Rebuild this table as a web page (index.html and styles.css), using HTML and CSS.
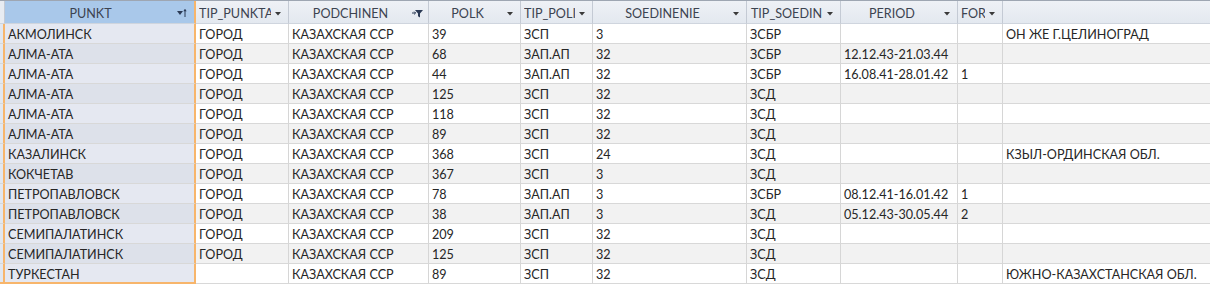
FILE: index.html
```html
<!DOCTYPE html>
<html lang="ru">
<head>
<meta charset="utf-8">
<title>Datasheet</title>
<link rel="stylesheet" href="styles.css">
</head>
<body>
<div class="sheet">
  <div class="row head">
    <div class="c selc"></div>
    <div class="c h sel"><span class="lbl">PUNKT</span><svg class="ic sort" width="10" height="9" viewBox="0 0 10 9"><path d="M0 3h6l-3 4z" fill="#2b3a55"/><path d="M8 9V1.5" stroke="#2b3a55" stroke-width="1"/><path d="M6.3 3.2L8 1l1.7 2.2z" fill="#2b3a55"/></svg></div>
    <div class="c h"><span class="lbl">TIP_PUNKTA</span><svg class="ic dd" width="6" height="4" viewBox="0 0 6 4"><path d="M0 0h6l-3 3.5z" fill="#3a3a3a"/></svg></div>
    <div class="c h"><span class="lbl">PODCHINEN</span><svg class="ic filt" width="11" height="9" viewBox="0 0 11 9"><path d="M3 1h8l-3 3.5V8.5l-2-1.2V4.5z" fill="#2b3a55"/><path d="M0 4h3.5M2.2 2.6L3.6 4 2.2 5.4" stroke="#2b3a55" stroke-width="1" fill="none"/></svg></div>
    <div class="c h"><span class="lbl">POLK</span><svg class="ic dd" width="6" height="4" viewBox="0 0 6 4"><path d="M0 0h6l-3 3.5z" fill="#3a3a3a"/></svg></div>
    <div class="c h"><span class="lbl">TIP_POLI</span><svg class="ic dd" width="6" height="4" viewBox="0 0 6 4"><path d="M0 0h6l-3 3.5z" fill="#3a3a3a"/></svg></div>
    <div class="c h"><span class="lbl">SOEDINENIE</span><svg class="ic dd" width="6" height="4" viewBox="0 0 6 4"><path d="M0 0h6l-3 3.5z" fill="#3a3a3a"/></svg></div>
    <div class="c h"><span class="lbl">TIP_SOEDIN</span><svg class="ic dd" width="6" height="4" viewBox="0 0 6 4"><path d="M0 0h6l-3 3.5z" fill="#3a3a3a"/></svg></div>
    <div class="c h"><span class="lbl">PERIOD</span><svg class="ic dd" width="6" height="4" viewBox="0 0 6 4"><path d="M0 0h6l-3 3.5z" fill="#3a3a3a"/></svg></div>
    <div class="c h"><span class="lbl">FOR</span><svg class="ic dd" width="6" height="4" viewBox="0 0 6 4"><path d="M0 0h6l-3 3.5z" fill="#3a3a3a"/></svg></div>
    <div class="c h last"></div>
  </div>

  <div class="row"><div class="c selc"></div><div class="c sel">АКМОЛИНСК</div><div class="c">ГОРОД</div><div class="c">КАЗАХСКАЯ ССР</div><div class="c">39</div><div class="c">ЗСП</div><div class="c">3</div><div class="c">ЗСБР</div><div class="c"></div><div class="c"></div><div class="c last">ОН ЖЕ Г.ЦЕЛИНОГРАД</div></div>
  <div class="row alt"><div class="c selc"></div><div class="c sel">АЛМА-АТА</div><div class="c">ГОРОД</div><div class="c">КАЗАХСКАЯ ССР</div><div class="c">68</div><div class="c">ЗАП.АП</div><div class="c">32</div><div class="c">ЗСБР</div><div class="c">12.12.43-21.03.44</div><div class="c"></div><div class="c last"></div></div>
  <div class="row"><div class="c selc"></div><div class="c sel">АЛМА-АТА</div><div class="c">ГОРОД</div><div class="c">КАЗАХСКАЯ ССР</div><div class="c">44</div><div class="c">ЗАП.АП</div><div class="c">32</div><div class="c">ЗСБР</div><div class="c">16.08.41-28.01.42</div><div class="c">1</div><div class="c last"></div></div>
  <div class="row alt"><div class="c selc"></div><div class="c sel">АЛМА-АТА</div><div class="c">ГОРОД</div><div class="c">КАЗАХСКАЯ ССР</div><div class="c">125</div><div class="c">ЗСП</div><div class="c">32</div><div class="c">ЗСД</div><div class="c"></div><div class="c"></div><div class="c last"></div></div>
  <div class="row"><div class="c selc"></div><div class="c sel">АЛМА-АТА</div><div class="c">ГОРОД</div><div class="c">КАЗАХСКАЯ ССР</div><div class="c">118</div><div class="c">ЗСП</div><div class="c">32</div><div class="c">ЗСД</div><div class="c"></div><div class="c"></div><div class="c last"></div></div>
  <div class="row alt"><div class="c selc"></div><div class="c sel">АЛМА-АТА</div><div class="c">ГОРОД</div><div class="c">КАЗАХСКАЯ ССР</div><div class="c">89</div><div class="c">ЗСП</div><div class="c">32</div><div class="c">ЗСД</div><div class="c"></div><div class="c"></div><div class="c last"></div></div>
  <div class="row"><div class="c selc"></div><div class="c sel">КАЗАЛИНСК</div><div class="c">ГОРОД</div><div class="c">КАЗАХСКАЯ ССР</div><div class="c">368</div><div class="c">ЗСП</div><div class="c">24</div><div class="c">ЗСД</div><div class="c"></div><div class="c"></div><div class="c last">КЗЫЛ-ОРДИНСКАЯ ОБЛ.</div></div>
  <div class="row alt"><div class="c selc"></div><div class="c sel">КОКЧЕТАВ</div><div class="c">ГОРОД</div><div class="c">КАЗАХСКАЯ ССР</div><div class="c">367</div><div class="c">ЗСП</div><div class="c">3</div><div class="c">ЗСД</div><div class="c"></div><div class="c"></div><div class="c last"></div></div>
  <div class="row"><div class="c selc"></div><div class="c sel">ПЕТРОПАВЛОВСК</div><div class="c">ГОРОД</div><div class="c">КАЗАХСКАЯ ССР</div><div class="c">78</div><div class="c">ЗАП.АП</div><div class="c">3</div><div class="c">ЗСБР</div><div class="c">08.12.41-16.01.42</div><div class="c">1</div><div class="c last"></div></div>
  <div class="row alt"><div class="c selc"></div><div class="c sel">ПЕТРОПАВЛОВСК</div><div class="c">ГОРОД</div><div class="c">КАЗАХСКАЯ ССР</div><div class="c">38</div><div class="c">ЗАП.АП</div><div class="c">3</div><div class="c">ЗСД</div><div class="c">05.12.43-30.05.44</div><div class="c">2</div><div class="c last"></div></div>
  <div class="row"><div class="c selc"></div><div class="c sel">СЕМИПАЛАТИНСК</div><div class="c">ГОРОД</div><div class="c">КАЗАХСКАЯ ССР</div><div class="c">209</div><div class="c">ЗСП</div><div class="c">32</div><div class="c">ЗСД</div><div class="c"></div><div class="c"></div><div class="c last"></div></div>
  <div class="row alt"><div class="c selc"></div><div class="c sel">СЕМИПАЛАТИНСК</div><div class="c">ГОРОД</div><div class="c">КАЗАХСКАЯ ССР</div><div class="c">125</div><div class="c">ЗСП</div><div class="c">32</div><div class="c">ЗСД</div><div class="c"></div><div class="c"></div><div class="c last"></div></div>
  <div class="row end"><div class="c selc"></div><div class="c sel">ТУРКЕСТАН</div><div class="c"></div><div class="c">КАЗАХСКАЯ ССР</div><div class="c">89</div><div class="c">ЗСП</div><div class="c">32</div><div class="c">ЗСД</div><div class="c"></div><div class="c"></div><div class="c last">ЮЖНО-КАЗАХСТАНСКАЯ ОБЛ.</div></div>
</div>
</body>
</html>
```

FILE: styles.css
```css
html, body {
  margin: 0;
  padding: 0;
  background: #ffffff;
}
.sheet {
  width: 1210px;
  font-family: "Lato", "Open Sans", sans-serif;
  font-size: 12.6px;
  color: #262626;
  border-top: 1px solid #9ea6b2;
}
.row {
  display: grid;
  grid-template-columns: 5px 191px 93px 140px 92px 72px 154px 94px 117px 45px 207px;
  height: 20px;
  background: #ffffff;
}
.row.alt {
  background: #f2f2f2;
}
.c {
  box-sizing: border-box;
  border-right: 1px solid #d6d6d6;
  border-bottom: 1px solid #d8d8d8;
  padding: 3px 3px 0 3px;
  line-height: 16px;
  white-space: nowrap;
  overflow: hidden;
}
.c.last {
  border-right: none;
}
.c.selc {
  padding: 0;
  background: #e1e7f0;
  border-right: 2px solid #f7b56b;
  border-bottom: 1px solid #d8d8d8;
}
.c.sel {
  background: #e5e8f1;
  border-right: 2px solid #f7b56b;
}
.row.alt .c.sel {
  background: #dde1ea;
}
.row.end .c.sel,
.row.end .c.selc {
  border-bottom: 2px solid #f7b56b;
}
.row.head {
  height: 23px;
  background: linear-gradient(#eef1f6, #e3e8ef);
  color: #3c4350;
}
.row.head .c {
  border-right: 1px solid #c4cad4;
  border-bottom: 1px solid #cfd5de;
  line-height: 19px;
  display: flex;
  align-items: center;
  padding: 3px 7px 0 3px;
}
.row.head .c.selc {
  background: #e8ecf2;
  border-right: 1px solid #c4cad4;
  padding: 0;
}
.row.head .c.sel {
  background: #a9c8ea;
  border-right: 2px solid #f7b56b;
}
.row.head .c.last {
  border-right: none;
}
.lbl {
  flex: 1;
  min-width: 0;
  overflow: hidden;
  text-align: center;
  white-space: nowrap;
}
.ic {
  flex: none;
  margin-left: 4px;
}
.ic.sort {
  margin-bottom: 2px;
}
.ic.filt {
  margin-left: 3px;
  margin-right: -2px;
}
```
